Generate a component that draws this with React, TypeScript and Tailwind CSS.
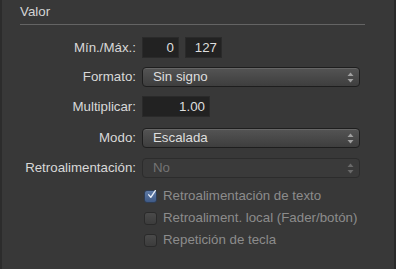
const FONT = { fontFamily: '"Liberation Sans", Arial, sans-serif' };

function Arrows({ dim }: { dim?: boolean }) {
  const c = dim ? "#6a6a6a" : "#a0a0a0";
  return (
    <svg width="7" height="11" viewBox="0 0 7 11" className="shrink-0">
      <path d="M3.5 0.5 L6.5 4 L0.5 4 Z" fill={c} />
      <path d="M3.5 10.5 L6.5 7 L0.5 7 Z" fill={c} />
    </svg>
  );
}

function Select({ value, disabled }: { value: string; disabled?: boolean }) {
  return (
    <div
      className={
        "flex h-[20px] w-[218px] items-center justify-between rounded-[4px] border pl-[10px] pr-[5px] text-[13.3px] " +
        (disabled
          ? "border-[#2c2c2c] bg-[#3a3a3a] text-[#747474]"
          : "border-[#1e1e1e] bg-gradient-to-b from-[#545454] to-[#3e3e3e] text-[#dedede] shadow-[inset_0_1px_0_#666]")
      }
    >
      <span>{value}</span>
      <Arrows dim={disabled} />
    </div>
  );
}

function Field({ value, w }: { value: string; w: string }) {
  return (
    <div
      className={
        "flex h-[21px] items-center justify-end border border-[#2a2a2a] bg-[#222222] pr-[4px] text-[13.3px] text-[#dedede] " +
        w
      }
    >
      {value}
    </div>
  );
}

function Row({
  label,
  dim,
  className,
  children,
}: {
  label: string;
  dim?: boolean;
  className: string;
  children: React.ReactNode;
}) {
  return (
    <div className={"flex items-center " + className}>
      <div
        className={
          "w-[117px] pr-[1px] text-right text-[13.3px] whitespace-nowrap " +
          (dim ? "text-[#c8c8c8]" : "text-[#d8d8d8]")
        }
      >
        {label}
      </div>
      <div className="ml-[5px] flex gap-[6px]">{children}</div>
    </div>
  );
}

function Check({ label, checked }: { label: string; checked?: boolean }) {
  return (
    <div className="flex h-[22px] items-center pl-[124px]">
      <div
        className={
          "flex h-[13px] w-[13px] items-center justify-center rounded-[3px] border " +
          (checked
            ? "border-[#2e3d55] bg-gradient-to-b from-[#5e7aa6] to-[#3f5a86]"
            : "border-[#2a2a2a] bg-gradient-to-b from-[#4a4a4a] to-[#3c3c3c]")
        }
      >
        {checked && (
          <svg width="13" height="13" viewBox="0 0 13 13" className="-mt-[3px] ml-[2px]">
            <path
              d="M2.5 7 L5.5 10.5 L12 1"
              fill="none"
              stroke="#e8eef8"
              strokeWidth="2"
              strokeLinecap="round"
              strokeLinejoin="round"
            />
          </svg>
        )}
      </div>
      <span className="ml-[6px] text-[13.3px] text-[#8c8c8c]">{label}</span>
    </div>
  );
}

export default function App() {
  return (
    <div
      className="h-[269px] w-[396px] overflow-hidden border-l-2 border-r-2 border-l-[#2c2c2c] border-r-[#2a2a2a] bg-[#383838]"
      style={FONT}
    >
      <div className="pl-[18px] pr-[29px]">
        <div className="pt-[4px] text-[13.3px] leading-[16px] text-[#d4d4d4]">Valor</div>
        <div className="mt-[4px] h-[1px] bg-[#646464]" />

        <Row label="Mín./Máx.:" className="mt-[12px]">
          <Field value="0" w="w-[37px]" />
          <Field value="127" w="w-[37px]" />
        </Row>
        <Row label="Formato:" className="mt-[9px]">
          <Select value="Sin signo" />
        </Row>
        <Row label="Multiplicar:" className="mt-[9px]">
          <Field value="1.00" w="w-[68px]" />
        </Row>
        <Row label="Modo:" className="mt-[11px]">
          <Select value="Escalada" />
        </Row>
        <Row label="Retroalimentación:" className="mt-[10px]">
          <Select value="No" disabled />
        </Row>

        <div className="mt-[7px]">
          <Check label="Retroalimentación de texto" checked />
          <Check label="Retroaliment. local (Fader/botón)" />
          <Check label="Repetición de tecla" />
        </div>
      </div>
    </div>
  );
}
